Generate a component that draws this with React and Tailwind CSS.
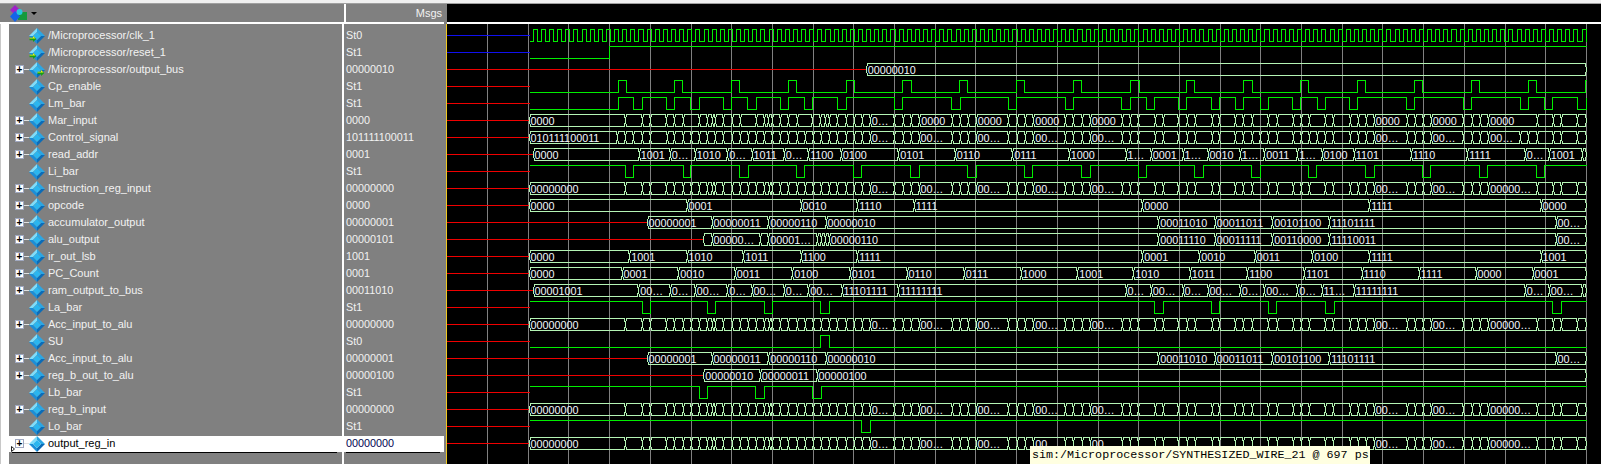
import React from 'react';

const GRID = Array.from({ length: 28 }, (_, k) => Math.round(487 + 40.7 * k));
const WAVE_START = 528.7;
const WAVE_END = 1586;

const rowY = (i) => 35 + 17 * i;
const snap = (x) => Math.round(x) + 0.5;

// transitions were read off crops, hence the origin + v / 3
const seg = (origin, list) =>
  list.map((v) =>
    Array.isArray(v) ? { x: origin + v[0] / 3, text: v[1] } : { x: origin + v / 3 }
  );

const busActivity = (first) => [
  { x: WAVE_START, text: first },
  ...seg(430, [585, 635, 660, 708, 733, 758, 783, 807, 832, 846, 855, 880, 905, 930, 955, 978, 1002, 1016, 1027, 1050, 1075, 1100, 1125, 1150, 1172, 1197]),
  ...seg(830, [22, 47, 72, 96, [120, '0…'], 193, 218, 243, [266, '00…'], 365, 390, 415, [437, '00…'], 534, 560, 585, [610, '00…'], 705, 730, 755, [780, '00…'], 875, 900, 925, 975, 998, 1045, 1070, 1095]),
  ...seg(1210, [5, 28, 76, 100, 125, 175, 200, 248, 272, 297, 345, 370, 420, 444, 468, [492, '00…'], 590, 614, 638, [663, '00…'], 760, 785, 810, [835, '00000…'], 980, 1028, 1052, 1102]),
];

const accInput = [
  ...seg(430, [[650, '00000001'], [845, '00000011'], [1015, '00000110'], [1187, '00000010']]),
  ...seg(830, [[985, '00011010']]),
  ...seg(1210, [[15, '00011011'], [187, '00101100'], [358, '11101111'], [1037, '00…']]),
];

const signals = [
  { name: '/Microprocessor/clk_1', value: 'St0', arrow: 'left', clock: true },
  { name: '/Microprocessor/reset_1', value: 'St1', arrow: 'left', start: 0, edges: [609.3] },
  { name: '/Microprocessor/output_bus', value: '00000010', arrow: 'right', bus: seg(830, [[108, '00000010']]) },
  {
    name: 'Cp_enable', value: 'St1', start: 0,
    edges: [
      ...seg(430, [563, 587, 733, 757, 904, 928, 1075, 1099]),
      ...seg(830, [47, 71, 217, 242, 388, 412, 559, 583, 730, 754, 899, 926, 1069, 1093]),
      ...seg(1210, [100, 125, 271, 295, 442, 466, 613, 637, 784, 808, 955, 979, 1125]),
    ].map((e) => e.x),
  },
  {
    name: 'Lm_bar', value: 'St1', start: 0,
    edges: [
      ...seg(430, [563, 610, 637, 709, 733, 781, 807, 880, 904, 952, 977, 1051, 1075, 1123, 1147]),
      ...seg(830, [22, 47, 193, 217, 364, 389, 533, 559, 704, 730, 874, 899, 948, 973, 1045, 1069]),
      ...seg(1210, [3, 28, 76, 100, 150, 175, 247, 271, 320, 345, 418, 442, 589, 613, 760, 784, 930, 955, 1003, 1027, 1102, 1127]),
    ].map((e) => e.x),
  },
  {
    name: 'Mar_input', value: '0000',
    bus: [
      { x: WAVE_START, text: '0000' },
      ...seg(430, [585, 635, 660, 708, 733, 758, 807, 832, 846, 855, 880, 905, 930, 977, 1002, 1015, 1025, 1050, 1075, 1100, 1147, 1170, 1185, 1197]),
      ...seg(830, [22, 47, 72, 96, [120, '0…'], 193, 218, 243, [268, '0000'], 365, 390, 415, [438, '0000'], 534, 560, 585, [610, '0000'], 705, 730, 755, [780, '0000'], 875, 900, 925, 975, 998, 1045, 1070, 1095]),
      ...seg(1210, [5, 28, 76, 100, 125, 175, 200, 248, 272, 297, 345, 370, 420, 444, 468, [492, '0000'], 590, 614, 638, [663, '0000'], 760, 785, 810, [835, '0000'], 980, 1028, 1052, 1102]),
    ],
  },
  {
    name: 'Control_signal', value: '101111100011',
    bus: [
      { x: WAVE_START, text: '010111100011' },
      ...seg(430, [560, 585, 610, 635, 660, 710, 733, 758, 783, 807, 832, 855, 880, 905, 930, 955, 978, 1002, 1027, 1050, 1075, 1100, 1125, 1150, 1172, 1197]),
      ...seg(830, [22, 47, 72, 96, [120, '0…'], 193, 218, 243, [266, '00…'], 365, 390, 415, [437, '00…'], 534, 560, 585, [610, '00…'], 705, 730, 755, [780, '00…'], 875, 900, 925, 975, 998, 1045, 1070, 1095]),
      ...seg(1210, [5, 28, 76, 100, 125, 150, 175, 200, 248, 272, 297, 320, 345, 370, 420, 444, 468, [492, '00…'], 590, 614, 638, [663, '00…'], 760, 785, 810, [835, '00…'], 930, 955, 980, 1028, 1052, 1102]),
    ],
  },
  {
    name: 'read_addr', value: '0001',
    bus: [
      ...seg(430, [[308, '0000'], [627, '1001'], [720, '0…'], [795, '1010'], [892, '0…'], [965, '1011'], [1062, '0…'], [1135, '1100']]),
      ...seg(830, [[33, '0100'], [205, '0101'], [375, '0110'], [547, '0111'], [717, '1000'], [887, '1…'], [963, '0001'], [1058, '1…'], [1133, '0010']]),
      ...seg(1210, [[90, '1…'], [163, '0011'], [262, '1…'], [335, '0100'], [432, '1101'], [603, '1110'], [772, '1111'], [945, '0…'], [1017, '1001'], 1115]),
    ],
  },
  {
    name: 'Li_bar', value: 'St1', start: 1,
    edges: [
      ...seg(430, [586, 610, 758, 781, 928, 953, 1099, 1123]),
      ...seg(830, [70, 94, 241, 266, 412, 437, 583, 607, 754, 779, 925, 949, 1093, 1120]),
      ...seg(1210, [124, 151, 295, 319, 466, 491, 637, 661, 808, 832, 979, 1003]),
    ].map((e) => e.x),
  },
  { name: 'Instruction_reg_input', value: '00000000', bus: busActivity('00000000') },
  {
    name: 'opcode', value: '0000',
    bus: [
      { x: WAVE_START, text: '0000' },
      ...seg(430, [[770, '0001'], [1112, '0010']]),
      ...seg(830, [[82, '1110'], [252, '1111'], [937, '0000']]),
      ...seg(1210, [[478, '1111'], [992, '0000']]),
    ],
  },
  { name: 'accumulator_output', value: '00000001', bus: accInput },
  {
    name: 'alu_output', value: '00000101',
    bus: [
      ...seg(430, [820, [845, '00000…'], 990, [1015, '00001…'], 1160, 1172, 1185, [1197, '00000110']]),
      ...seg(830, [[985, '00011110']]),
      ...seg(1210, [[15, '00011111'], [187, '00110000'], [358, '11110011'], [1037, '00…']]),
    ],
  },
  {
    name: 'ir_out_lsb', value: '1001',
    bus: [
      { x: WAVE_START, text: '0000' },
      ...seg(430, [[598, '1001'], [770, '1010'], [940, '1011'], [1112, '1100']]),
      ...seg(830, [[82, '1111'], [937, '0001'], [1108, '0010']]),
      ...seg(1210, [[135, '0011'], [307, '0100'], [478, '1111'], [992, '1001']]),
    ],
  },
  {
    name: 'PC_Count', value: '0001',
    bus: [
      { x: WAVE_START, text: '0000' },
      ...seg(430, [[575, '0001'], [745, '0010'], [915, '0011'], [1087, '0100']]),
      ...seg(830, [[60, '0101'], [230, '0110'], [402, '0111'], [572, '1000'], [742, '1001'], [910, '1010'], [1080, '1011']]),
      ...seg(1210, [[112, '1100'], [283, '1101'], [455, '1110'], [627, '1111'], [797, '0000'], [968, '0001']]),
    ],
  },
  {
    name: 'ram_output_to_bus', value: '00011010',
    bus: [
      ...seg(430, [[308, '00001001'], [625, '00…'], [720, '0…'], [795, '00…'], [892, '0…'], [965, '00…'], [1062, '0…'], [1135, '00…']]),
      ...seg(830, [[35, '11101111'], [205, '11111111'], [887, '0…'], [963, '00…'], [1058, '0…'], [1133, '00…']]),
      ...seg(1210, [[90, '0…'], [163, '00…'], [262, '0…'], [335, '11…'], [432, '11111111'], [945, '0…'], [1017, '00…'], 1115]),
    ],
  },
  {
    name: 'La_bar', value: 'St1', start: 1,
    edges: [
      ...seg(430, [637, 660, 832, 856, 1003, 1027, 1171, 1196]),
      ...seg(830, [973, 998]),
      ...seg(1210, [3, 28, 175, 199, 346, 371, 1027, 1052]),
    ].map((e) => e.x),
  },
  { name: 'Acc_input_to_alu', value: '00000000', bus: busActivity('00000000') },
  { name: 'SU', value: 'St0', start: 0, edges: [820.3, 828.7] },
  { name: 'Acc_input_to_alu', value: '00000001', bus: accInput },
  {
    name: 'reg_b_out_to_alu', value: '00000100',
    bus: seg(430, [[820, '00000010'], [990, '00000011'], [1160, '00000100']]),
  },
  { name: 'Lb_bar', value: 'St1', start: 1, edges: seg(430, [807, 832, 976, 1003, 1147, 1172]).map((e) => e.x) },
  { name: 'reg_b_input', value: '00000000', bus: busActivity('00000000') },
  { name: 'Lo_bar', value: 'St1', start: 1, edges: [861, 869.7] },
  { name: 'output_reg_in', value: '00000000', bus: busActivity('00000000'), selected: true },
];

const clockEdges = () => {
  const edges = [];
  for (let x = WAVE_START + 4.07; x < WAVE_END; x += 4.065) edges.push(x);
  return edges;
};

const digitalPath = (c, start, edges) => {
  const hi = c - 5.5;
  const lo = c + 6.5;
  let level = start;
  let d = `M${snap(WAVE_START)} ${level ? hi : lo}`;
  edges.forEach((e) => {
    const x = snap(e);
    level = level ? 0 : 1;
    d += `H${x}V${level ? hi : lo}`;
  });
  return `${d}H${snap(WAVE_END)}`;
};

const busPath = (c, segs) => {
  const hi = c - 5.5;
  const lo = c + 6.5;
  const mid = c + 0.5;
  return segs
    .map((s, i) => {
      const a = snap(s.x);
      const b = i + 1 < segs.length ? snap(segs[i + 1].x) : snap(WAVE_END);
      return `M${a} ${mid}L${a + 1} ${hi}H${b - 1}L${b} ${mid}L${b - 1} ${lo}H${a + 1}Z`;
    })
    .join('');
};

function Wave({ signal, index }) {
  const c = rowY(index);
  const firstX = signal.bus ? signal.bus[0].x : WAVE_START;
  const idle = signal.arrow === 'left' ? '#1010f0' : '#f00000';

  return (
    <g>
      <path d={`M447 ${c + 0.5}H${snap(firstX)}`} stroke={idle} fill="none" shapeRendering="crispEdges" />
      {signal.bus ? (
        <>
          <path d={busPath(c, signal.bus)} stroke="#b4f4b4" fill="none" shapeRendering="crispEdges" />
          {signal.bus
            .filter((s) => s.text)
            .map((s, i) => (
              <text key={i} x={s.x + 1.8} y={c + 5} fill="#f4f8ff" fontSize="10.8px">
                {s.text}
              </text>
            ))}
        </>
      ) : (
        <path
          d={digitalPath(c, signal.clock ? 0 : signal.start, signal.clock ? clockEdges() : signal.edges)}
          stroke="#00ee00"
          fill="none"
          shapeRendering="crispEdges"
        />
      )}
    </g>
  );
}

function Arrow({ className }) {
  return (
    <svg viewBox="0 0 8 7" className={className}>
      <path d="M0 2h4V0l4 3.5L4 7V5H0z" fill="#14a014" />
      <path d="M0 2h4V0l3 3H0z" fill="#f0f020" />
    </svg>
  );
}

function Diamond() {
  return (
    <svg viewBox="0 0 16 16" className="h-[16px] w-[16px]">
      <path d="M8 0L0 8h4l4-4z" fill="#7fdcfa" />
      <path d="M8 0l8 8h-4L8 4z" fill="#2ba6e4" />
      <path d="M16 8l-8 8v-4l4-4z" fill="#0b6cb8" />
      <path d="M0 8l8 8v-4L4 8z" fill="#1b8ed8" />
      <path d="M8 4l4 4-4 4-4-4z" fill="#2bb6ef" />
    </svg>
  );
}

function SignalName({ signal }) {
  return (
    <div className={`relative flex h-[17px] items-center pl-[6px] ${signal.selected ? 'border-t border-b border-t-[#808080] border-b-white bg-white text-black' : 'text-[#f2f2f2]'}`}>
      <div className="flex w-[14px] items-center">
        {signal.bus && (
          <>
            <span className="flex h-[9px] w-[9px] items-center justify-center border border-[#a0a8c0] bg-white text-[10px] leading-none font-bold text-black">+</span>
            <span className="h-px w-[5px] bg-[#e0e0e0]" />
          </>
        )}
      </div>
      <Diamond />
      {signal.arrow === 'left' && <Arrow className="absolute top-[9px] left-[20px] h-[6px] w-[8px]" />}
      {signal.arrow === 'right' && <Arrow className="absolute top-[9px] left-[28px] h-[6px] w-[8px]" />}
      <span className="ml-[3px] whitespace-nowrap">{signal.name}</span>
    </div>
  );
}

function HeaderIcon() {
  return (
    <svg viewBox="0 0 17 17" className="h-[17px] w-[17px]">
      <path d="M5 0l5 5-5 5-5-5z" fill="#a020c8" />
      <rect x="8" y="7" width="9" height="8" fill="#159a3c" />
      <path d="M5 6l5 5.500-5 5.500-5-5.500z" fill="#1464e8" />
      <circle cx="9.500" cy="7" r="3" fill="#28c8e0" />
    </svg>
  );
}

export default function App() {
  return (
    <div className="flex h-[464px] w-[1601px] overflow-hidden bg-black font-['Liberation_Sans',sans-serif] text-[11px]">
      <div className="flex w-[447px] flex-col bg-[#808080]">
        <div className="h-[3px] bg-[#f0f0f0]" />
        <div className="flex h-[19px] items-center border-t border-[#a0a0a0] pl-[10px]">
          <div className="flex w-[334px] items-center">
            <HeaderIcon />
            <span className="ml-[4px] h-0 w-0 border-x-[3px] border-t-[3px] border-x-transparent border-t-black" />
          </div>
          <div className="h-full w-[2px] bg-white" />
          <div className="w-[96px] text-right text-[#f2f2f2]">Msgs</div>
        </div>
        <div className="h-[2px] w-[444px] bg-white" />
        <div className="flex flex-1">
          <div className="h-full w-[9px] border-l border-[#c8c8c8] bg-white" />
          <div className="relative w-[333px] pt-[3px]">
            {signals.map((s, i) => (
              <SignalName key={i} signal={s} />
            ))}
            <div className="ml-[3px] h-px w-[325px] bg-black" />
            <svg viewBox="0 0 4 6" className="absolute top-[422px] left-[2px] h-[6px] w-[4px]">
              <path d="M0.500 0.500l3 2.500-3 2.500z" fill="none" stroke="#202020" />
            </svg>
          </div>
          <div className="h-full w-[2px] bg-white" />
          <div className="w-[100px] pt-[3px] text-[10.8px]">
            {signals.map((s, i) => (
              <div key={i} className={`flex h-[17px] items-center pl-[2px] ${s.selected ? 'border-t border-b border-t-[#808080] border-b-white bg-white text-[#000050]' : 'text-[#f2f2f2]'}`}>
                {s.value}
              </div>
            ))}
            <div className="ml-[2px] h-px w-[94px] bg-black" />
          </div>
          <div className="w-[2px]" />
          <div className="h-full w-px bg-[#f0c820]" />
        </div>
      </div>

      <div className="relative flex w-[1154px] flex-col">
        <div className="h-[3px] bg-[#f0f0f0]" />
        <div className="h-[19px] border-t border-[#a0a0a0] bg-black" />
        <div className="h-[2px] bg-white" />
        <svg viewBox="447 24 1154 440" className="h-[440px] w-[1154px]">
          {GRID.map((x) => (
            <path key={x} d={`M${x + 0.5} 24V464`} stroke="#808080" shapeRendering="crispEdges" />
          ))}
          {signals.map((s, i) => (
            <Wave key={i} signal={s} index={i} />
          ))}
        </svg>
        <div className="absolute top-[446px] left-[583px] h-[18px] w-[340px] bg-[#ffffe1] pl-[2px] font-['Liberation_Mono',monospace] text-[11.7px] leading-[18px] whitespace-nowrap text-black">
          sim:/Microprocessor/SYNTHESIZED_WIRE_21 @ 697 ps
        </div>
      </div>
    </div>
  );
}
